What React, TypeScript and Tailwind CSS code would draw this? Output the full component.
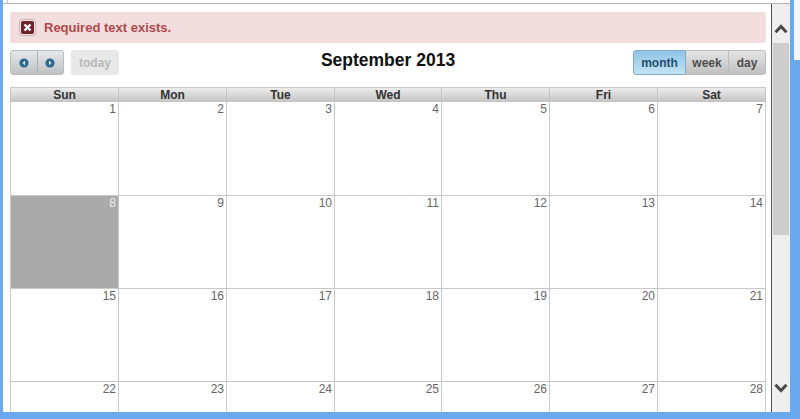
const weeks = [
  [1, 2, 3, 4, 5, 6, 7],
  [8, 9, 10, 11, 12, 13, 14],
  [15, 16, 17, 18, 19, 20, 21],
  [22, 23, 24, 25, 26, 27, 28],
];
const dayNames = ['Sun', 'Mon', 'Tue', 'Wed', 'Thu', 'Fri', 'Sat'];
const columns = 'grid grid-cols-[108px_108px_108px_107px_108px_108px_109px]';

function ArrowDot({ dir }: { dir: 'left' | 'right' }) {
  return (
    <svg width="10" height="10" viewBox="0 0 10 10">
      <circle cx="5" cy="5" r="4.6" fill="#2f6a8f" />
      <path d={dir === 'left' ? 'M6 2.8v4.4L3.4 5z' : 'M4 2.8v4.4L6.6 5z'} fill="#dfe8ee" />
    </svg>
  );
}

function ErrorIcon() {
  return (
    <div className="flex h-[15px] w-[15px] items-center justify-center rounded-[3px] bg-[#f5e6e6] shadow-[0_0_1px_1px_#c9b5b5]">
      <svg width="13" height="13" viewBox="0 0 13 13">
        <rect width="13" height="13" rx="2" fill="#6e2126" />
        <path d="M3.5 3.5l6 6M9.5 3.5l-6 6" stroke="#fff" strokeWidth="2.4" />
      </svg>
    </div>
  );
}

function Toolbar() {
  return (
    <div className="mt-[7px] grid h-[25px] grid-cols-[1fr_auto_1fr] items-center">
      <div className="flex items-center">
        <div className="flex h-[25px] w-[54px] rounded-[3px] border border-[#b9bdc0] bg-gradient-to-b from-[#e6e9eb] to-[#bfc2c4]">
          <div className="flex flex-1 items-center justify-center border-r border-[#aeb1b3]">
            <ArrowDot dir="left" />
          </div>
          <div className="flex flex-1 items-center justify-center">
            <ArrowDot dir="right" />
          </div>
        </div>
        <div className="ml-[7px] flex h-[25px] w-[48px] items-center justify-center rounded-[3px] bg-[#e8e8e8] text-[12px] font-bold text-[#b9b9b9]">
          today
        </div>
      </div>
      <h2 className="-mt-[4px] text-[17.5px] font-bold text-[#111]">September 2013</h2>
      <div className="flex h-[25px] justify-self-end rounded-[3px] text-[12px] font-bold text-[#4d4d4d]">
        <div className="flex w-[53px] items-center justify-center rounded-l-[3px] border border-[#7fa9c6] bg-gradient-to-b from-[#8fc3e6] to-[#c5e3f4] text-[#24506e]">
          month
        </div>
        <div className="flex w-[43px] items-center justify-center border-y border-r border-[#bcbcbc] bg-gradient-to-b from-[#e4e4e4] to-[#c0c0c0]">
          week
        </div>
        <div className="flex w-[37px] items-center justify-center rounded-r-[3px] border-y border-r border-[#bcbcbc] bg-gradient-to-b from-[#e4e4e4] to-[#c0c0c0]">
          day
        </div>
      </div>
    </div>
  );
}

function Calendar() {
  return (
    <div className="mt-[12px] min-h-0 flex-1 overflow-hidden">
      <div className={`${columns} h-[15px] border-t border-[#c8c8c8] bg-gradient-to-b from-[#ececec] to-[#c3c3c3]`}>
        {dayNames.map(d => (
          <div
            key={d}
            className="flex items-center justify-center border-l border-[#c4c4c4] text-[12px] font-bold leading-none text-[#333] last:border-r"
          >
            {d}
          </div>
        ))}
      </div>
      {weeks.map((week, i) => (
        <div key={i} className={`${columns} h-[93px] ${i > 0 ? 'border-t border-[#c8c8c8]' : ''}`}>
          {week.map(n => (
            <div
              key={n}
              className={`border-l border-[#c8c8c8] pr-[2px] text-right text-[12px] leading-[14px] last:border-r ${
                n === 8 ? 'bg-[#aaaaaa] text-[#eeeeee]' : 'text-[#666]'
              }`}
            >
              {n}
            </div>
          ))}
        </div>
      ))}
    </div>
  );
}

function Scrollbar() {
  return (
    <div className="flex w-[19px] flex-col border-l border-[#555] bg-[#eeeeee]">
      <div className="flex h-[39px] items-start justify-center pt-[20px]">
        <svg width="14" height="10" viewBox="0 0 14 10">
          <path d="M1.5 8.2L7 2.5l5.5 5.7" fill="none" stroke="#4a4a4a" strokeWidth="3" />
        </svg>
      </div>
      <div className="mx-[1px] h-[192px] bg-[#cdcdcd]" />
      <div className="flex-1" />
      <div className="flex h-[29px] items-start justify-center">
        <svg width="14" height="10" viewBox="0 0 14 10">
          <path d="M1.5 1.8L7 7.5l5.5-5.7" fill="none" stroke="#4a4a4a" strokeWidth="3" />
        </svg>
      </div>
    </div>
  );
}

export default function App() {
  return (
    <div
      className="flex h-[419px] w-[800px] overflow-hidden bg-[#6aa9ee]"
      style={{ fontFamily: '"Liberation Sans", Arial, sans-serif' }}
    >
      <div className="ml-[3px] mb-[7px] flex w-[787px] flex-col bg-white">
        <div className="h-[4px] border-b border-[#b5b5b5]">
          <div className="ml-[4px] h-[3px] w-px bg-[#c8c8c8]" />
        </div>
        <div className="flex min-h-0 flex-1">
          <div className="flex w-[768px] flex-col pl-[7px] pr-[5px]">
            <div className="mt-[8px] flex h-[31px] items-center rounded-[2px] bg-[#f2dede] pl-[10px] text-[13px] font-bold text-[#b4474c]">
              <ErrorIcon />
              <span className="ml-[9px]">Required text exists.</span>
            </div>
            <Toolbar />
            <Calendar />
          </div>
          <Scrollbar />
        </div>
      </div>
      <div className="ml-[4px] h-[60px] w-[6px] bg-[#f4f6f8]" />
    </div>
  );
}
